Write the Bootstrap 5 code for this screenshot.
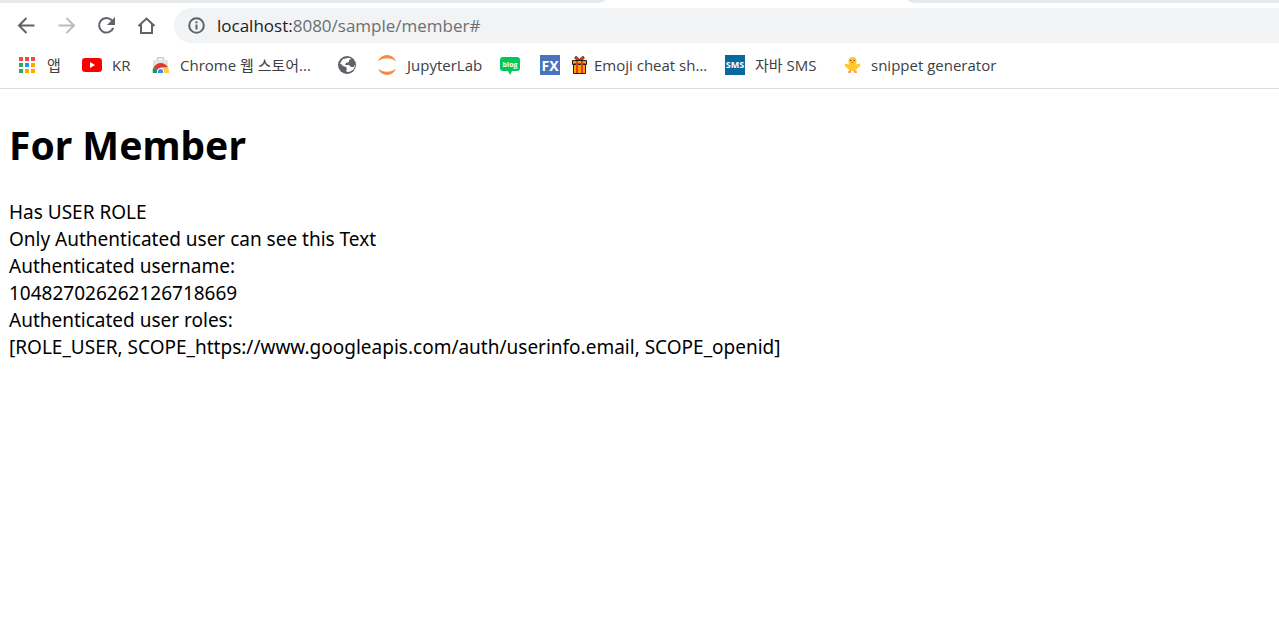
<!DOCTYPE html>
<html lang="ko">
<head>
<meta charset="utf-8">
<meta name="viewport" content="width=device-width, initial-scale=1">
<title>For Member</title>
<link href="https://cdn.jsdelivr.net/npm/bootstrap@5.3.0/dist/css/bootstrap.min.css" rel="stylesheet">
<style>
  body { font-family: "Open Sans", "Noto Sans CJK KR", sans-serif; color: #000; background: #fff; }
  svg { display: block; flex: none; }
  .tab-strip { height: 3px; background: #fff; }
  .tab-left { width: 605px; background: #e7eaed; border-bottom-right-radius: 8px 3px; }
  .tab-gap { width: 303px; }
  .tab-right { background: #e7eaed; border-bottom-left-radius: 8px 3px; }
  .toolbar { padding: 5px 0 0 16px; }
  .tool { width: 20px; height: 20px; margin-right: 20px; color: #5f6368; }
  .tool:disabled { color: #babcbe; opacity: 1; }
  .address { height: 35px; background: #f1f3f4; border-radius: 18px 0 0 18px; padding-left: 13px; margin-left: -2px; gap: 11px; }
  .url { font-size: 17px; line-height: 24px; color: #6b6f73; }
  .url b { font-weight: 400; color: #202124; }
  .bookmarks { height: 46px; padding: 0 0 2px 17px; border-bottom: 1px solid #dadce0;
    grid-template-columns: 65px 70px 186px 39px 123px 40px 185px 119px 1fr; }
  .bookmarks a { gap: 10px; font-size: 15px; line-height: 20px; color: #3c4043; }
  .page { padding: 31px 9px; font-family: "Noto Sans", "Noto Sans CJK KR", sans-serif; font-size: 19px; line-height: 27px; }
  .page h1 { font-size: 39px; line-height: 50px; font-weight: 700; margin-bottom: 29px; }
</style>
</head>
<body>
<header>
  <div class="tab-strip d-flex">
    <div class="tab-left"></div><div class="tab-gap"></div><div class="tab-right flex-grow-1"></div>
  </div>
  <div class="toolbar d-flex align-items-center">
    <button class="tool btn p-0 border-0" aria-label="Back"><svg width="20" height="20" viewBox="0 0 20 20" fill="none" stroke="currentColor" stroke-width="2"><path d="M18.500 9.500H3.500M10.500 2 3 9.500l7.500 7.500"/></svg></button>
    <button class="tool btn p-0 border-0" aria-label="Forward" disabled><svg width="20" height="20" viewBox="0 0 20 20" fill="none" stroke="currentColor" stroke-width="2"><path d="M2.500 9.500H17.500M10.500 2 18 9.500l-7.500 7.500"/></svg></button>
    <button class="tool btn p-0 border-0" aria-label="Reload"><svg width="20" height="20" viewBox="0 0 20 20" fill="none" stroke="currentColor" stroke-width="2"><path d="M17.200 12A7.300 7.300 0 1 1 15.800 4.300"/><path d="M19 1v8h-8z" fill="currentColor" stroke="none"/></svg></button>
    <button class="tool btn p-0 border-0" aria-label="Home"><svg width="20" height="20" viewBox="0 0 20 20" fill="none" stroke="currentColor" stroke-width="2"><path d="M2.500 10 10.500 2.500 18.500 10M5 8.500V17h11V8.500"/></svg></button>
    <div class="address d-flex align-items-center flex-grow-1">
      <svg width="19" height="19" viewBox="0 0 19 19" fill="none" stroke="#5f6368" stroke-width="2"><circle cx="9.500" cy="9.500" r="7.300"/><path d="M9.500 8.500v5M9.500 5.300v2"/></svg>
      <div class="url"><b>localhost:</b>8080/sample/member#</div>
    </div>
  </div>
  <nav class="bookmarks d-grid align-items-center text-nowrap" aria-label="Bookmarks">
    <a href="#" class="d-flex align-items-center text-decoration-none">
      <svg width="20" height="20" viewBox="0 0 20 20"><path fill="#f04a40" d="M2 2h4v4H2zM8 2h4v4H8zM14 2h4v4h-4z"/><path fill="#34a860" d="M2 8h4v4H2zM2 14h4v4H2z"/><path fill="#2196f3" d="M8 8h4v4H8z"/><path fill="#fbab00" d="M14 8h4v4h-4zM8 14h4v4H8zM14 14h4v4h-4z"/></svg>앱</a>
    <a href="#" class="d-flex align-items-center text-decoration-none">
      <svg width="20" height="20" viewBox="0 0 20 20"><rect y="3" width="20" height="14" rx="3" fill="#f00"/><path fill="#fff" d="M8 7l5 3-5 3z"/></svg>KR</a>
    <a href="#" class="d-flex align-items-center text-decoration-none">
      <svg width="18" height="20" viewBox="0 0 18 20"><path d="M5.500 5V2.800h6V5" fill="none" stroke="#c4c6c8" stroke-width="1.300"/><path fill="#e2e4e6" d="M1 5h15v7l1 6H0l1-6z"/><path fill="#db3a30" d="M2 11.500Q5 8 8.500 8q5 0 7.500 4.500H8.500L5 16z"/><path fill="#0f9d58" d="M2 11.500 6.500 18H1q-1-3.500 1-6.500z"/><path fill="#ffcd40" d="M11 12.500h5q1.500 2.500.8 5.500H10z"/><path fill="#fff" d="M5 18q-.5-5 3.500-5t3.500 5z"/><path fill="#4285f4" d="M6 18q-.5-4 2.500-4t2.500 4z"/></svg>Chrome 웹 스토어...</a>
    <a href="#" aria-label="Website" class="d-flex align-items-center text-decoration-none">
      <svg width="20" height="20" viewBox="0 0 20 20"><circle cx="9" cy="10" r="9" fill="#5f6368"/><path fill="#fff" d="M9 3l3 0 1 1-2 1v2L8 8l-1 2h4l2 2h3v-2l1 1q-1 4-4 5-3 2-5 0l1-2-1-2-3-1-2-2-1 0q1-3 3-5l3-.5z"/></svg></a>
    <a href="#" class="d-flex align-items-center text-decoration-none">
      <svg width="20" height="20" viewBox="0 0 20 20" fill="#f58a42"><path d="M1 6.500Q3.500 0 10 0t9 6.500Q15 3.200 10 3.200T1 6.500zM1 13.500Q3.500 20 10 20t9-6.500Q15 16.800 10 16.800T1 13.500z"/></svg>JupyterLab</a>
    <a href="#" aria-label="Blog" class="d-flex align-items-center text-decoration-none">
      <svg width="20" height="20" viewBox="0 0 20 20"><path fill="#03c75a" d="M3 2h14q3 0 3 3v8q0 3-3 3h-5l-2 4-2-4H3q-3 0-3-3V5q0-3 3-3z"/><text x="10" y="12" text-anchor="middle" font-size="7" font-weight="700" fill="#fff">blog</text></svg></a>
    <a href="#" class="d-flex align-items-center text-decoration-none">
      <svg width="20" height="20" viewBox="0 0 20 20"><path fill="#4a72bd" d="M0 0h20v20H0z"/><text x="10" y="15.500" text-anchor="middle" font-size="14" font-weight="700" fill="#fff">FX</text></svg>
      <span class="d-flex align-items-center gap-1"><svg width="20" height="20" viewBox="0 0 20 20"><path fill="#ffa000" stroke="#222" d="M3.500 9h12v9.500h-12zM2.500 5.500h14v4h-14z"/><path fill="#e53922" stroke="#222" stroke-width=".7" d="M9.500 5Q4 5 5 2q2-2 4.500 3Q12 0 14 2q1 3-4.500 3z"/><path fill="#e53922" d="M6 6h2v12H6zM11 6h2v12h-2z"/></svg>Emoji cheat sh...</span></a>
    <a href="#" class="d-flex align-items-center text-decoration-none">
      <svg width="20" height="20" viewBox="0 0 20 20"><path fill="#0868a0" d="M0 0h20v20H0z"/><text x="10" y="13" text-anchor="middle" font-size="9" font-weight="700" fill="#fff">SMS</text></svg>자바 SMS</a>
    <a href="#" class="d-flex align-items-center text-decoration-none">
      <svg width="17" height="20" viewBox="0 0 16 20"><path fill="#ffca28" d="M4 6a4 4 0 0 1 8 0v2l-1 1.500 4.500-1q1 3-2.500 4.500-1 3-5 3t-5-3Q-.5 11.500.5 8.500l4.500 1L4 8z"/><path d="M6 15v2H3.500M10 15v2h2.500" fill="none" stroke="#f5903c" stroke-width="1.300"/><path fill="#f57c00" d="M6.500 7h3L8 8.500z"/><circle cx="6.300" cy="5.500" r=".6"/><circle cx="9.700" cy="5.500" r=".6"/></svg>snippet generator</a>
  </nav>
</header>
<main class="page">
  <h1>For Member</h1>
  <div>Has USER ROLE</div>
  <div>Only Authenticated user can see this Text</div>
  <div>Authenticated username:</div>
  <div>104827026262126718669</div>
  <div>Authenticated user roles:</div>
  <div>[ROLE_USER, SCOPE_https://www.googleapis.com/auth/userinfo.email, SCOPE_openid]</div>
</main>
<script src="https://cdn.jsdelivr.net/npm/bootstrap@5.3.0/dist/js/bootstrap.bundle.min.js"></script>
</body>
</html>
